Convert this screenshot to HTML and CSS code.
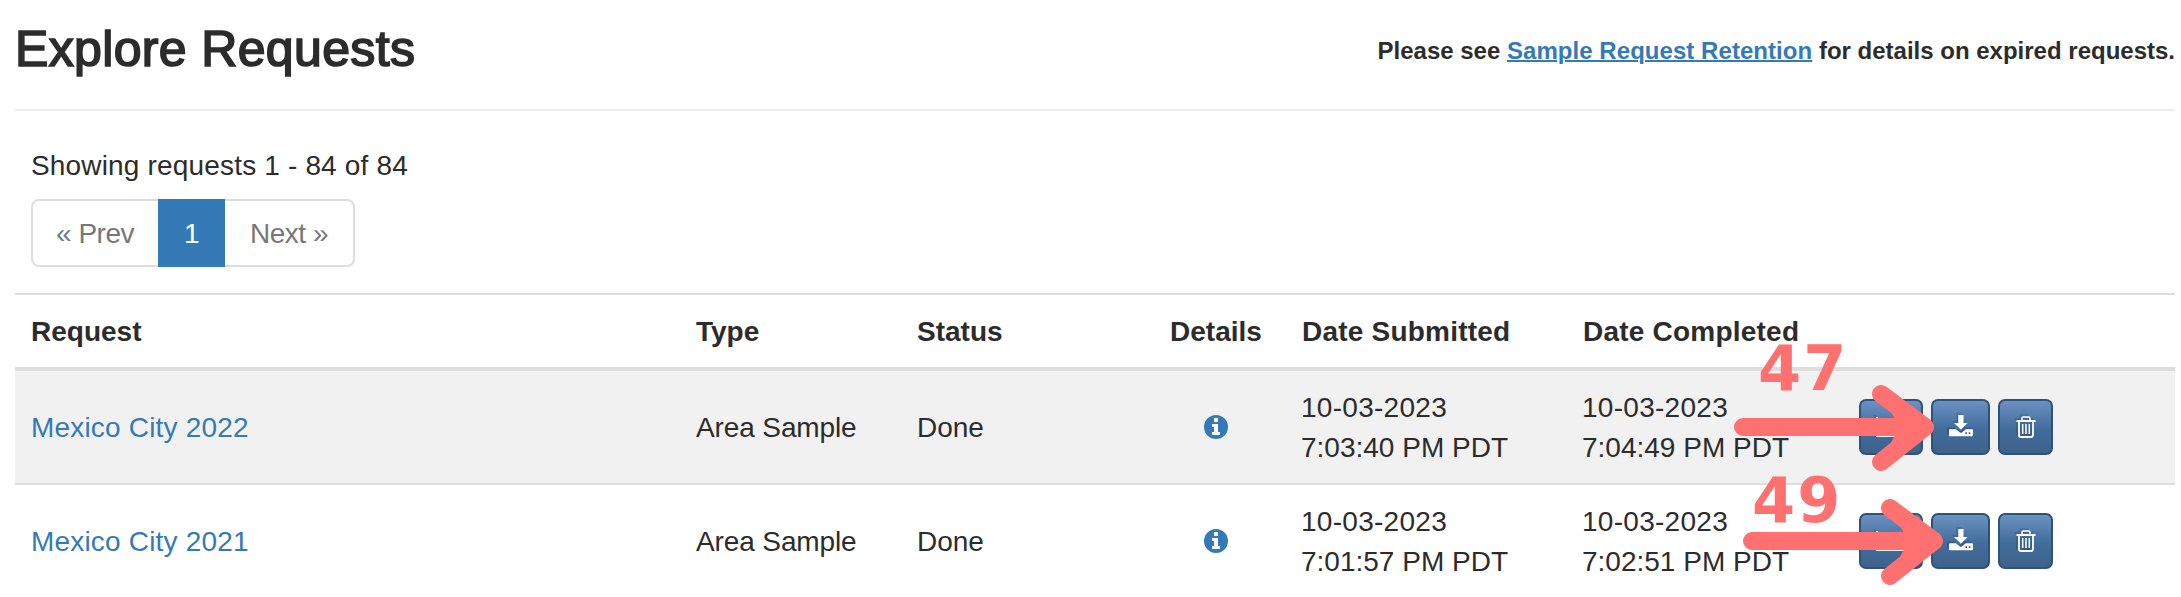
FILE: index.html
```html
<!DOCTYPE html>
<html lang="en">
<head>
<meta charset="utf-8">
<title>Explore Requests</title>
<link rel="stylesheet" href="styles.css">
</head>
<body>
<svg class="defs" width="0" height="0">
  <symbol id="info" viewBox="0 0 24 24"><circle cx="12" cy="12" r="12" fill="#337ab7"/><path class="cut" d="M10 3h4v4h-4zM8 9h6v8h2v3H8v-3h2v-5H8z"/></symbol>
  <symbol id="chart" viewBox="0 0 30 24"><path d="M0 2h2v18h28v2H0zM4 16l7-6 5 4 5-6h5v5l-9 7-6-5-7 5z"/></symbol>
  <symbol id="download" viewBox="0 0 24 22"><path d="M9.300 0h5.200v8h4L11.900 14.700 5 8h4.300zM1 14.200h6l3.600 3.100q1.300 1 2.600 0l3.600-3.100H23a1 1 0 0 1 1 1v5a1 1 0 0 1-1 1H1a1 1 0 0 1-1-1v-5a1 1 0 0 1 1-1zM16.300 17.300v1.600h1.600v-1.600zm3.400 0v1.600h1.600v-1.600z" fill-rule="evenodd"/></symbol>
  <symbol id="trash" viewBox="0 0 20 22"><path d="M6 4V2.500Q6 1 7.500 1h5Q14 1 14 2.500V4" fill="none" stroke="#fff" stroke-width="1.500"/><path d="M.500 5h19M3 5v14q0 2 2 2h10q2 0 2-2V5" fill="none" stroke="#fff" stroke-width="1.800"/><path d="M6.700 8v10M10 8v10M13.300 8v10" fill="none" stroke="#fff" stroke-width="1.500"/></symbol>
</svg>
<main class="page">
  <header class="page-header">
    <h1>Explore Requests</h1>
    <p class="notice">Please see <a href="#">Sample Request Retention</a> for details on expired requests.</p>
  </header>
  <section class="summary">
    <p class="count">Showing requests 1 - 84 of 84</p>
    <nav class="pagination"><span class="prev">« Prev</span><span class="active">1</span><span class="next">Next »</span></nav>
  </section>
  <section class="table">
    <div class="row head">
      <div>Request</div><div>Type</div><div>Status</div><div class="center">Details</div><div class="wide">Date Submitted</div><div class="wide">Date Completed</div><div></div>
    </div>
    <div class="row odd">
      <div><a href="#">Mexico City 2022</a></div><div class="type">Area Sample</div><div>Done</div>
      <div class="center"><svg class="info"><use href="#info"/></svg></div>
      <div><span class="date">10-03-2023</span><br>7:03:40 PM PDT</div><div><span class="date">10-03-2023</span><br>7:04:49 PM PDT</div>
      <div class="actions">
        <button class="chart"><svg><use href="#chart"/></svg></button><button class="download"><svg><use href="#download"/></svg></button><button class="trash"><svg><use href="#trash"/></svg></button>
      </div>
    </div>
    <div class="row">
      <div><a href="#">Mexico City 2021</a></div><div class="type">Area Sample</div><div>Done</div>
      <div class="center"><svg class="info"><use href="#info"/></svg></div>
      <div><span class="date">10-03-2023</span><br>7:01:57 PM PDT</div><div><span class="date">10-03-2023</span><br>7:02:51 PM PDT</div>
      <div class="actions">
        <button class="chart"><svg><use href="#chart"/></svg></button><button class="download"><svg><use href="#download"/></svg></button><button class="trash"><svg><use href="#trash"/></svg></button>
      </div>
    </div>
  </section>
</main>
<svg class="annotations" width="2181" height="597">
  <g id="arrow"><path d="M1743 427H1920M1881 394L1925 427L1881 462"/><path class="fill" d="M1881 394L1925 427L1881 462L1900 427Z"/></g>
  <use href="#arrow" x="9" y="114"/>
  <text x="1758" y="390">47</text>
  <text x="1752" y="522">49</text>
</svg>
</body>
</html>
```
FILE: styles.css
```css
* { box-sizing: border-box; }
body { margin: 0; background: #fff; color: #2c2c2c; font: 28px/40px "Liberation Sans", Arial, sans-serif; overflow: hidden; }
p, h1 { margin: 0; }
a { color: #337ab7; text-decoration: none; }
.defs { position: absolute; }
.page { padding: 0 6px 0 15px; height: 597px; overflow: hidden; }
.page-header { display: flex; justify-content: space-between; height: 111px; border-bottom: 2px solid #eee; }
.page-header h1 { padding-top: 20px; font-size: 50px; font-weight: 400; line-height: 58px; letter-spacing: .35px; -webkit-text-stroke: 1.7px #2c2c2c; }
.notice { padding-top: 31px; font-size: 24px; font-weight: 700; }
.notice a { text-decoration: underline; text-decoration-thickness: 2px; letter-spacing: .05px; }
.summary { padding: 34px 16px 0; height: 182px; }
.count { padding-top: 1px; letter-spacing: .17px; }
.pagination { display: inline-flex; height: 68px; margin-top: 13px; border: 2px solid #ddd; border-radius: 8px; color: #777; }
.pagination span { padding-top: 13px; text-align: center; letter-spacing: -.5px; }
.pagination .prev { width: 125px; padding-right: 1px; }
.pagination .next { width: 128px; }
.pagination .active { width: 67px; margin: -2px 0; padding-top: 15px; background: #337ab7; color: #fff; }
.row { display: grid; grid-template-columns: 665px 221px 246px 138px 281px 276px 1fr; align-items: center; height: 114px; border-top: 2px solid #ddd; }
.row > div { padding: 2px 16px 0; white-space: nowrap; }
.row .center { padding: 2px 0 0; text-align: center; }
.row .wide { padding-left: 17px; letter-spacing: .22px; }
.row .type { letter-spacing: -.12px; }
.row a { letter-spacing: .18px; }
.date { letter-spacing: .28px; }
.head { height: 74px; font-weight: 700; }
.head + .row { height: 116px; border-top-width: 4px; }
.odd { background: #f1f1f1; }
.info { display: block; width: 24px; height: 24px; margin: -2px auto 0; }
.cut { fill: #fff; }
.row .actions { display: flex; gap: 8px; padding: 0 0 0 17px; }
.actions button { display: flex; align-items: center; justify-content: center; height: 56px; padding: 0; border: 2px solid #2e527a; border-radius: 7px; background: linear-gradient(#6c91c2, #416c9b 55%, #3f628b); }
.actions svg { fill: #fff; filter: drop-shadow(-2px -2px 0 #0002); }
.chart { width: 64px; }
.download { width: 59px; }
.trash { width: 55px; }
.chart svg { width: 30px; height: 24px; }
.download svg { width: 24px; height: 22px; margin-top: -2px; }
.trash svg { width: 20px; height: 22px; }
.annotations { position: absolute; top: 0; left: 0; }
.annotations path { fill: none; stroke: #ff7070; stroke-width: 18px; stroke-linecap: round; stroke-linejoin: round; }
.annotations .fill { fill: #ff7070; stroke-width: 1px; }
.annotations text { fill: #ff7070; font: 700 62px "DejaVu Sans", sans-serif; letter-spacing: 2px; }
```
